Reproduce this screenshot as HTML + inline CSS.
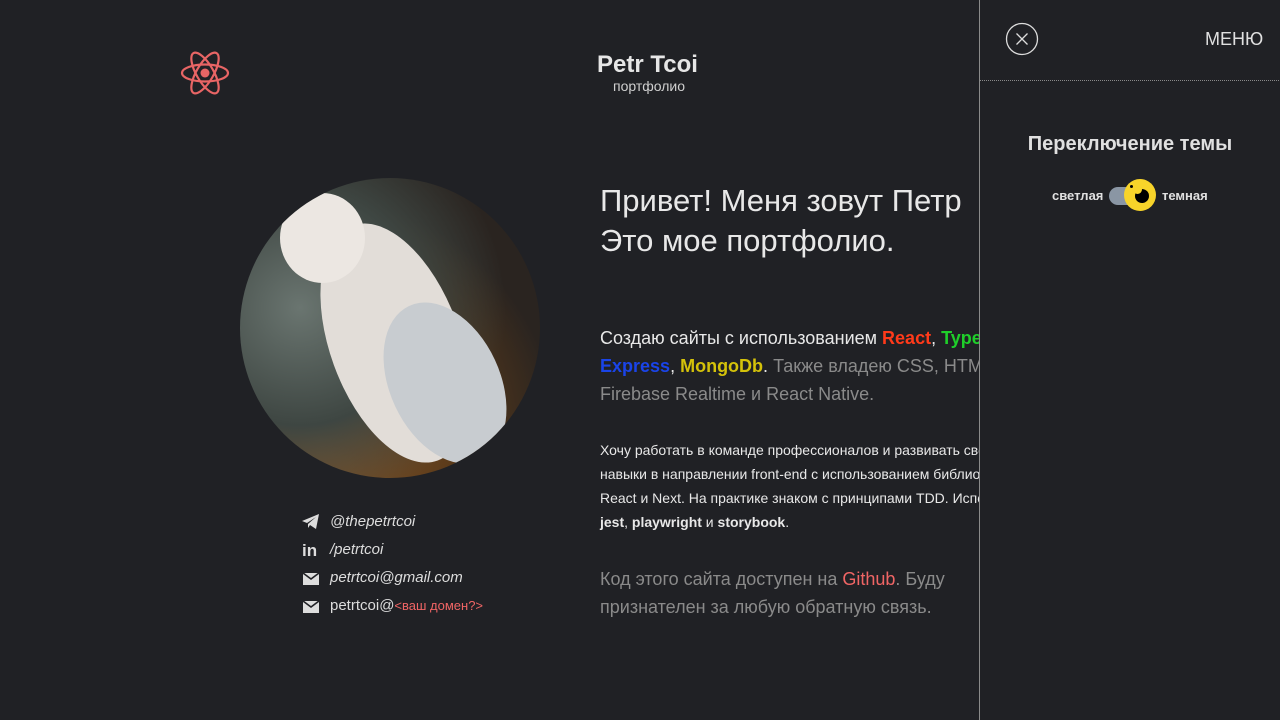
<!DOCTYPE html>
<html><head><meta charset="utf-8"><style>
*{margin:0;padding:0;box-sizing:border-box}
body{width:1280px;height:720px;overflow:hidden;background:#202125;font-family:"Liberation Sans","DejaVu Sans",sans-serif;color:#e8e8e8;position:relative}
.a{position:absolute;white-space:nowrap}
.main{position:absolute;left:0;top:0;width:980px;height:720px;overflow:hidden}
.panel{position:absolute;left:979px;top:0;width:301px;height:720px;background:#202125;border-left:1px solid #8a8a8a}
.g{color:#8a8a8a}
b{font-weight:bold}
</style></head><body>
<div class="main">
<svg class="a" style="left:180px;top:50px" width="50" height="46" viewBox="0 0 50 46">
<g fill="none" stroke="#e86565" stroke-width="2.2">
<ellipse cx="25" cy="23" rx="23" ry="8.5"/>
<ellipse cx="25" cy="23" rx="23" ry="8.5" transform="rotate(60 25 23)"/>
<ellipse cx="25" cy="23" rx="23" ry="8.5" transform="rotate(-60 25 23)"/>
</g><circle cx="25" cy="23" r="4.5" fill="#e86565"/></svg>
<div class="a" style="left:597px;top:51px;font-size:24px;font-weight:bold;color:#e6e6e6">Petr Tcoi</div>
<div class="a" style="left:613px;top:78px;font-size:14px;color:#cfcfcf">портфолио</div>

<div class="a" style="left:240px;top:178px;width:300px;height:300px;border-radius:50%;overflow:hidden;background:radial-gradient(circle at 60px 130px,#6a7570 0,#3e4642 40%,transparent 70%),radial-gradient(circle at 80px 260px,#8a5a2a 0,#5a3a1a 40%,transparent 70%),#2a2420">
<div style="position:absolute;left:90px;top:40px;width:130px;height:250px;border-radius:50%;background:#e2ddd8;transform:rotate(-20deg)"></div>
<div style="position:absolute;left:40px;top:15px;width:85px;height:90px;border-radius:50%;background:#ece7e2"></div>
<div style="position:absolute;left:150px;top:120px;width:110px;height:170px;border-radius:50%;background:#c8ccd0;transform:rotate(-25deg)"></div>
</div>

<svg class="a" style="left:302px;top:514px" width="18" height="15" viewBox="0 0 18 15"><path d="M0 7 L17 0 L14 15 L8 11 L6 14 L6 10 L14 3 L5 9 Z" fill="#ddd"/></svg>
<div class="a" style="left:330px;top:513px;font-size:15px;font-style:italic;color:#ddd">@thepetrtcoi</div>
<div class="a" style="left:302px;top:541px;font-size:17px;font-weight:bold;color:#ddd">in</div>
<div class="a" style="left:330px;top:541px;font-size:15px;font-style:italic;color:#ddd">/petrtcoi</div>
<svg class="a" style="left:303px;top:573px" width="16" height="12" viewBox="0 0 16 12"><rect width="16" height="12" fill="#ddd"/><path d="M0 0 L8 6 L16 0" stroke="#202125" stroke-width="1.6" fill="none"/></svg>
<div class="a" style="left:330px;top:569px;font-size:15px;font-style:italic;color:#ddd">petrtcoi@gmail.com</div>
<svg class="a" style="left:303px;top:601px" width="16" height="12" viewBox="0 0 16 12"><rect width="16" height="12" fill="#ddd"/><path d="M0 0 L8 6 L16 0" stroke="#202125" stroke-width="1.6" fill="none"/></svg>
<div class="a" style="left:330px;top:597px;font-size:15px;color:#ddd">petrtcoi@<span style="color:#f06565;font-size:13px">&lt;ваш домен?&gt;</span></div>

<div class="a" style="left:600px;top:181px;font-size:31px;line-height:40px;color:#e8e8e8;font-weight:300">Привет! Меня зовут Петр<br>Это мое портфолио.</div>
<div class="a" style="left:600px;top:324px;font-size:18px;line-height:28px;color:#e8e8e8">Создаю сайты с использованием <b style="color:#ff3a1a">React</b>, <b style="color:#1fcf2a">TypeScript</b><br><b style="color:#1a44e8">Express</b>, <b style="color:#d4c20a">MongoDb</b>. <span class="g">Также владею CSS, HTML,</span><br><span class="g">Firebase Realtime и React Native.</span></div>
<div class="a" style="left:600px;top:438px;font-size:14px;line-height:24px;color:#e8e8e8">Хочу работать в команде профессионалов и развивать свои<br>навыки в направлении front-end с использованием библиотек<br>React и Next. На практике знаком с принципами TDD. Использую<br><b>jest</b>, <b>playwright</b> и <b>storybook</b>.</div>
<div class="a" style="left:600px;top:565px;font-size:18px;line-height:28px;color:#8a8a8a">Код этого сайта доступен на <span style="color:#f06565">Github</span>. Буду<br>признателен за любую обратную связь.</div>
</div>

<div class="panel">
<svg class="a" style="left:25px;top:22px" width="34" height="34" viewBox="0 0 34 34"><circle cx="17" cy="17" r="15.5" fill="none" stroke="#ddd" stroke-width="1.3"/><path d="M11.5 11.5 L22.5 22.5 M22.5 11.5 L11.5 22.5" stroke="#ddd" stroke-width="1.3"/></svg>
<div class="a" style="left:225px;top:29px;font-size:18px;color:#e0e0e0">МЕНЮ</div>
<div class="a" style="left:0;top:80px;width:301px;border-top:1px dotted #8a8a8a"></div>
<div class="a" style="left:0;top:133px;width:300px;text-align:center;font-size:20px;font-weight:bold;color:#e0e0e0">Переключение темы</div>
<div class="a" style="left:72px;top:188px;font-size:13px;font-weight:bold;color:#e0e0e0">светлая</div>
<div class="a" style="left:129px;top:187px;width:40px;height:18px;border-radius:9px;background:#8a96a4"></div>
<div class="a" style="left:144px;top:179px;width:32px;height:32px;border-radius:50%;background:#f8d42a"></div>
<div class="a" style="left:155px;top:189px;width:14px;height:14px;border-radius:50%;background:#000"></div>
<div class="a" style="left:153px;top:185px;width:9px;height:9px;border-radius:50%;background:#f8d42a"></div>
<div class="a" style="left:150px;top:185px;width:3px;height:3px;border-radius:50%;background:#000"></div>
<div class="a" style="left:182px;top:188px;font-size:13px;font-weight:bold;color:#e0e0e0">темная</div>
</div>
</body></html>
